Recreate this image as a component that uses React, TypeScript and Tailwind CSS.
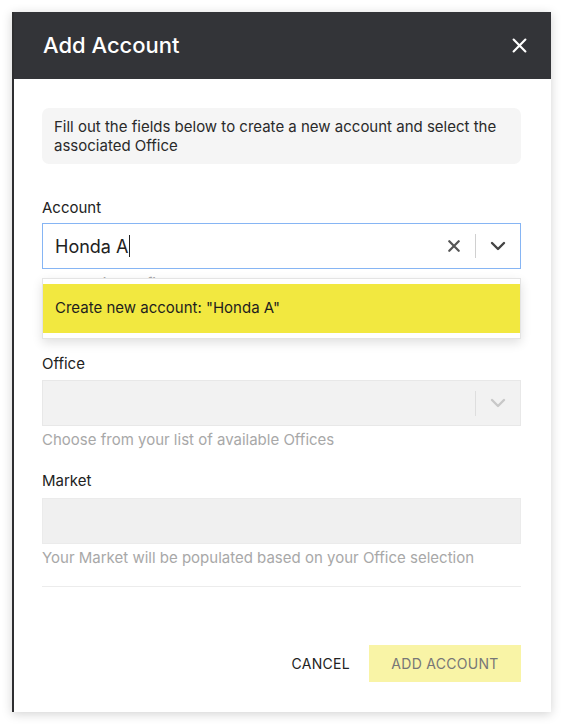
import React from "react";

const font = { fontFamily: "Inter, 'Noto Sans', sans-serif" };

function Chevron({ className }: { className?: string }) {
  return (
    <svg width="16" height="10" viewBox="0 0 16 10" className={className} fill="none">
      <path d="M2 2l6 6 6-6" stroke="currentColor" strokeWidth="2.4" strokeLinecap="round" strokeLinejoin="round" />
    </svg>
  );
}

function Cross({ size, stroke, className }: { size: number; stroke: number; className?: string }) {
  return (
    <svg width={size} height={size} viewBox="0 0 14 14" className={className} fill="none">
      <path d="M1.5 1.5l11 11M12.5 1.5l-11 11" stroke="currentColor" strokeWidth={stroke} strokeLinecap="round" />
    </svg>
  );
}

export default function App() {
  return (
    <div className="min-h-[726px] w-[563px] bg-white pt-[12px] pl-[12px]" style={font}>
      <div className="flex h-[700px] w-[539px] flex-col border-l-2 border-[#2e2e30] bg-white shadow-[0_2px_10px_rgba(0,0,0,0.18)]">
        {/* header */}
        <div className="flex h-[67px] items-center justify-between bg-[#333438] pl-[29px] pr-[24px]">
          <h2 className="text-[22px] font-medium text-white">Add Account</h2>
          <Cross size={15} stroke={2} className="text-white" />
        </div>

        {/* body */}
        <div className="flex flex-1 flex-col pl-[28px] pr-[30px] pt-[29px]">
          <div className="rounded-[7px] bg-[#f5f5f5] px-[12px] py-[9px] text-[15px] leading-[19px] text-[#2a2a2a]">
            Fill out the fields below to create a new account and select the associated Office
          </div>

          {/* account */}
          <label className="mt-[34px] block text-[15px] leading-[20px] text-[#222]">Account</label>
          <div className="relative mt-[5px]">
            <div className="flex h-[46px] items-center border border-[#86b5f4] bg-white pl-[12px]">
              <span className="text-[18px] text-[#222]">Honda A</span>
              <span className="ml-px h-[22px] w-px bg-[#222]" />
              <div className="ml-auto flex items-center">
                <Cross size={12} stroke={2.6} className="text-[#555]" />
                <span className="ml-[15px] h-[24px] w-px bg-[#d0d0d0]" />
                <Chevron className="mx-[14px] text-[#444]" />
              </div>
            </div>
            <p className="mt-[5px] text-[15px] leading-[20px] text-[#a8a8a8]">
              Start typing to find an account or create a new account
            </p>
            <div className="absolute left-0 right-0 top-[55px] border border-[#e4e4e4] bg-white py-[5px] shadow-[0_4px_10px_rgba(0,0,0,0.12)]">
              <div className="flex h-[49px] items-center bg-[#f2e840] px-[12px] text-[15px] text-[#1e1e1e]">
                Create new account: "Honda A"
              </div>
            </div>
          </div>

          {/* office */}
          <label className="mt-[60px] block text-[15px] leading-[20px] text-[#222]">Office</label>
          <div className="mt-[6px] flex h-[46px] items-center justify-end border border-[#e8e8e8] bg-[#f2f2f2]">
            <span className="h-[25px] w-px bg-[#dedede]" />
            <Chevron className="mx-[14px] text-[#c8c8c8]" />
          </div>
          <p className="mt-[4px] text-[15px] leading-[20px] text-[#a8a8a8]">Choose from your list of available Offices</p>

          {/* market */}
          <label className="mt-[21px] block text-[15px] leading-[20px] text-[#222]">Market</label>
          <div className="mt-[7px] h-[46px] border border-[#ebebeb] bg-[#f0f0f0]" />
          <p className="mt-[4px] text-[15px] leading-[20px] text-[#a8a8a8]">
            Your Market will be populated based on your Office selection
          </p>

          <div className="mt-[18px] h-px bg-[#ececec]" />

          {/* actions */}
          <div className="mt-[58px] flex items-center justify-end gap-[19px]">
            <button className="text-[14px] tracking-[0.3px] text-[#222]">CANCEL</button>
            <button className="h-[37px] w-[152px] bg-[#f9f4a6] text-[14px] tracking-[0.3px] text-[#777]">
              ADD ACCOUNT
            </button>
          </div>
        </div>
      </div>
    </div>
  );
}
